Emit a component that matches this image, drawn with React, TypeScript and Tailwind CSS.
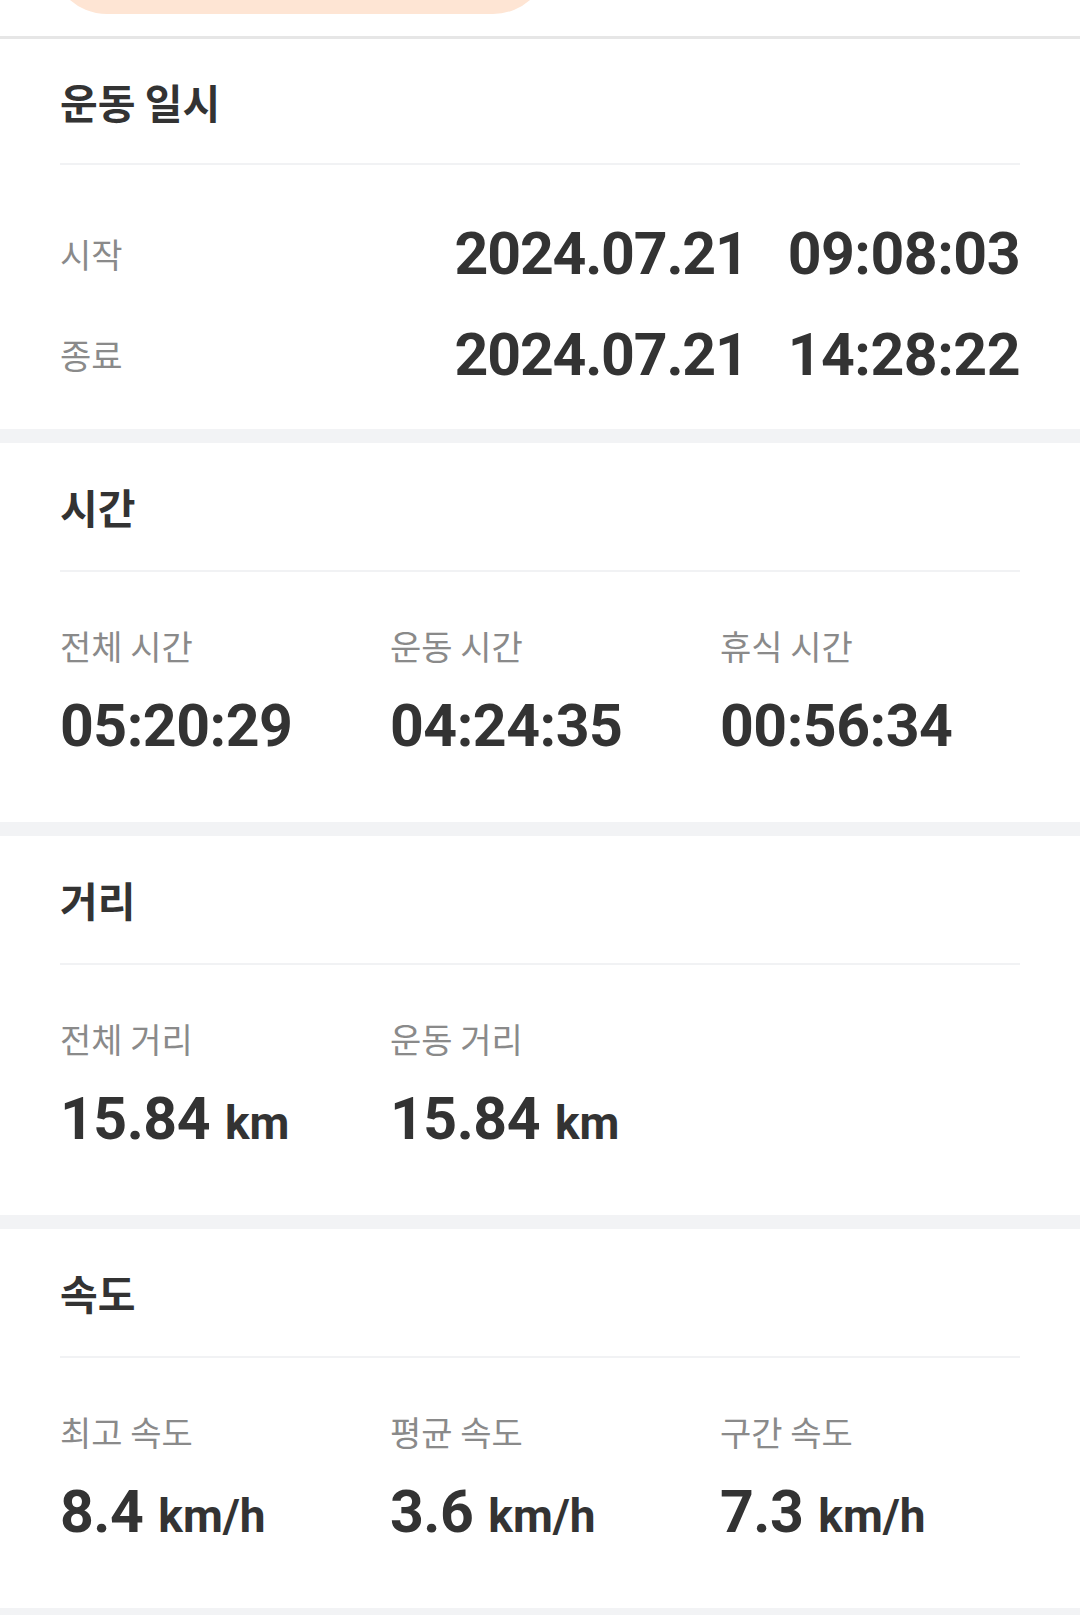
const kr = "font-['Noto_Sans_CJK_KR',sans-serif]";
const num = "font-['Roboto','Noto_Sans_CJK_KR',sans-serif] font-bold text-[#333333]";

type Stat = { label: string; value: string; unit?: string };

const SectionHeader = ({ title, h = 'h-[129px]' }: { title: string; h?: string }) => (
  <div className={`${h} flex items-center border-b-2 border-[#f1f2f4]`}>
    <h2 className={`${kr} text-[41px] font-bold text-[#333333] leading-none`}>{title}</h2>
  </div>
);

const StatGrid = ({ items }: { items: Stat[] }) => (
  <div className="flex pt-[52px] pb-[66px]">
    {items.map((s) => (
      <div key={s.label} className="w-[330px] shrink-0 flex flex-col">
        <span className={`${kr} text-[34px] leading-[44px] text-[#8a8a8a]`}>{s.label}</span>
        <div className="mt-[28px] h-[60px] flex items-baseline">
          <span className={`${num} text-[59px] leading-[60px] tracking-[-0.5px]`}>{s.value}</span>
          {s.unit && <span className={`${num} text-[46px] leading-[60px] ml-[15px]`}>{s.unit}</span>}
        </div>
      </div>
    ))}
  </div>
);

const Band = () => <div className="h-[14px] bg-[#f2f3f5]" />;

export default function App() {
  return (
    <div className="w-[1080px] bg-white">
      <div className="h-[36px] overflow-hidden">
        <div className="ml-[51px] -mt-[98px] w-[498px] h-[112px] rounded-[56px] bg-[#fee5d4]" />
      </div>
      <div className="h-[3px] bg-[#e6e6e6]" />

      <section className="px-[60px]">
        <SectionHeader title="운동 일시" h="h-[126px]" />
        <div className="pt-[38px] pb-[24px]">
          {[
            ['시작', '2024.07.21', '09:08:03'],
            ['종료', '2024.07.21', '14:28:22'],
          ].map(([label, date, time]) => (
            <div key={label} className="h-[101px] flex items-center justify-between">
              <span className={`${kr} text-[34px] text-[#8a8a8a]`}>{label}</span>
              <div className={`${num} text-[59px] leading-none flex gap-[40px]`}>
                <span className="tracking-[-1.2px]">{date}</span>
                <span className="tracking-[-0.5px]">{time}</span>
              </div>
            </div>
          ))}
        </div>
      </section>
      <Band />

      <section className="px-[60px]">
        <SectionHeader title="시간" />
        <StatGrid
          items={[
            { label: '전체 시간', value: '05:20:29' },
            { label: '운동 시간', value: '04:24:35' },
            { label: '휴식 시간', value: '00:56:34' },
          ]}
        />
      </section>
      <Band />

      <section className="px-[60px]">
        <SectionHeader title="거리" />
        <StatGrid
          items={[
            { label: '전체 거리', value: '15.84', unit: 'km' },
            { label: '운동 거리', value: '15.84', unit: 'km' },
          ]}
        />
      </section>
      <Band />

      <section className="px-[60px]">
        <SectionHeader title="속도" />
        <StatGrid
          items={[
            { label: '최고 속도', value: '8.4', unit: 'km/h' },
            { label: '평균 속도', value: '3.6', unit: 'km/h' },
            { label: '구간 속도', value: '7.3', unit: 'km/h' },
          ]}
        />
      </section>
      <Band />
    </div>
  );
}
